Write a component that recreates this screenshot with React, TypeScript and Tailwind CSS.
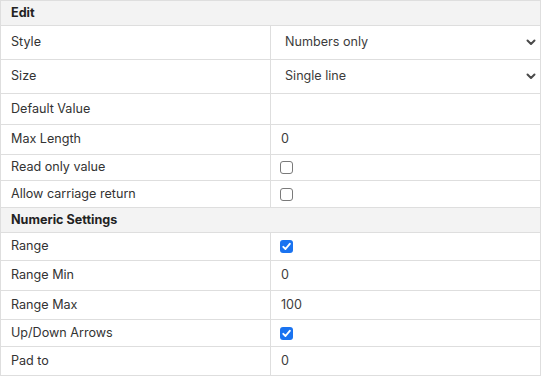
import React from "react";

type Row =
  | { kind: "header"; label: string; h: string }
  | { kind: "select"; label: string; value: string; h: string }
  | { kind: "text"; label: string; value: string; h: string }
  | { kind: "check"; label: string; checked: boolean; h: string };

const rows: Row[] = [
  { kind: "header", label: "Edit", h: "h-[25px]" },
  { kind: "select", label: "Style", value: "Numbers only", h: "h-[34px]" },
  { kind: "select", label: "Size", value: "Single line", h: "h-[34px]" },
  { kind: "text", label: "Default Value", value: "", h: "h-[31px]" },
  { kind: "text", label: "Max Length", value: "0", h: "h-[30px]" },
  { kind: "check", label: "Read only value", checked: false, h: "h-[26px]" },
  { kind: "check", label: "Allow carriage return", checked: false, h: "h-[27px]" },
  { kind: "header", label: "Numeric Settings", h: "h-[25px]" },
  { kind: "check", label: "Range", checked: true, h: "h-[28px]" },
  { kind: "text", label: "Range Min", value: "0", h: "h-[30px]" },
  { kind: "text", label: "Range Max", value: "100", h: "h-[29px]" },
  { kind: "check", label: "Up/Down Arrows", checked: true, h: "h-[27px]" },
  { kind: "text", label: "Pad to", value: "0", h: "h-[29px]" },
];

function Check({ checked }: { checked: boolean }) {
  if (checked) {
    return (
      <div className="w-[13px] h-[13px] rounded-[3px] bg-[#1a73f0] flex items-center justify-center">
        <svg width="9" height="9" viewBox="0 0 9 9">
          <path d="M1.3 4.8 L3.5 7 L7.8 1.8" fill="none" stroke="white" strokeWidth="1.9" strokeLinecap="round" strokeLinejoin="round" />
        </svg>
      </div>
    );
  }
  return <div className="w-[13px] h-[13px] rounded-[3px] border border-[#7a7a7a] bg-white" />;
}

export default function App() {
  return (
    <div className="bg-white w-[543px] h-[379px] text-[12.6px] text-[#333]" style={{ fontFamily: "Inter, 'Noto Sans', sans-serif" }}>
      <div className="w-[541px] border border-[#dedede] border-b-0 flex flex-col">
        {rows.map((r, i) => {
          if (r.kind === "header") {
            return (
              <div key={i} className={`${r.h} bg-[#f3f3f3] border-b border-[#dedede] flex items-center pl-[10px] font-bold text-[#222]`}>
                {r.label}
              </div>
            );
          }
          return (
            <div key={i} className={`${r.h} border-b border-[#dedede] flex`}>
              <div className="w-[269px] flex items-center pl-[10px]">{r.label}</div>
              <div className="flex-1 border-l border-[#dedede] flex items-center text-[#3c3c3c]">
                {r.kind === "select" && (
                  <div className="flex-1 flex items-center justify-between pl-[14px] pr-[4px]">
                    <span>{r.value}</span>
                    <svg width="10" height="7" viewBox="0 0 10 7">
                      <path d="M1.5 1.5 L5 5 L8.5 1.5" fill="none" stroke="#4a4a4a" strokeWidth="2" strokeLinecap="round" strokeLinejoin="round" />
                    </svg>
                  </div>
                )}
                {r.kind === "text" && <span className="pl-[10px]">{r.value}</span>}
                {r.kind === "check" && (
                  <div className="pl-[9px]">
                    <Check checked={r.checked} />
                  </div>
                )}
              </div>
            </div>
          );
        })}
      </div>
    </div>
  );
}
